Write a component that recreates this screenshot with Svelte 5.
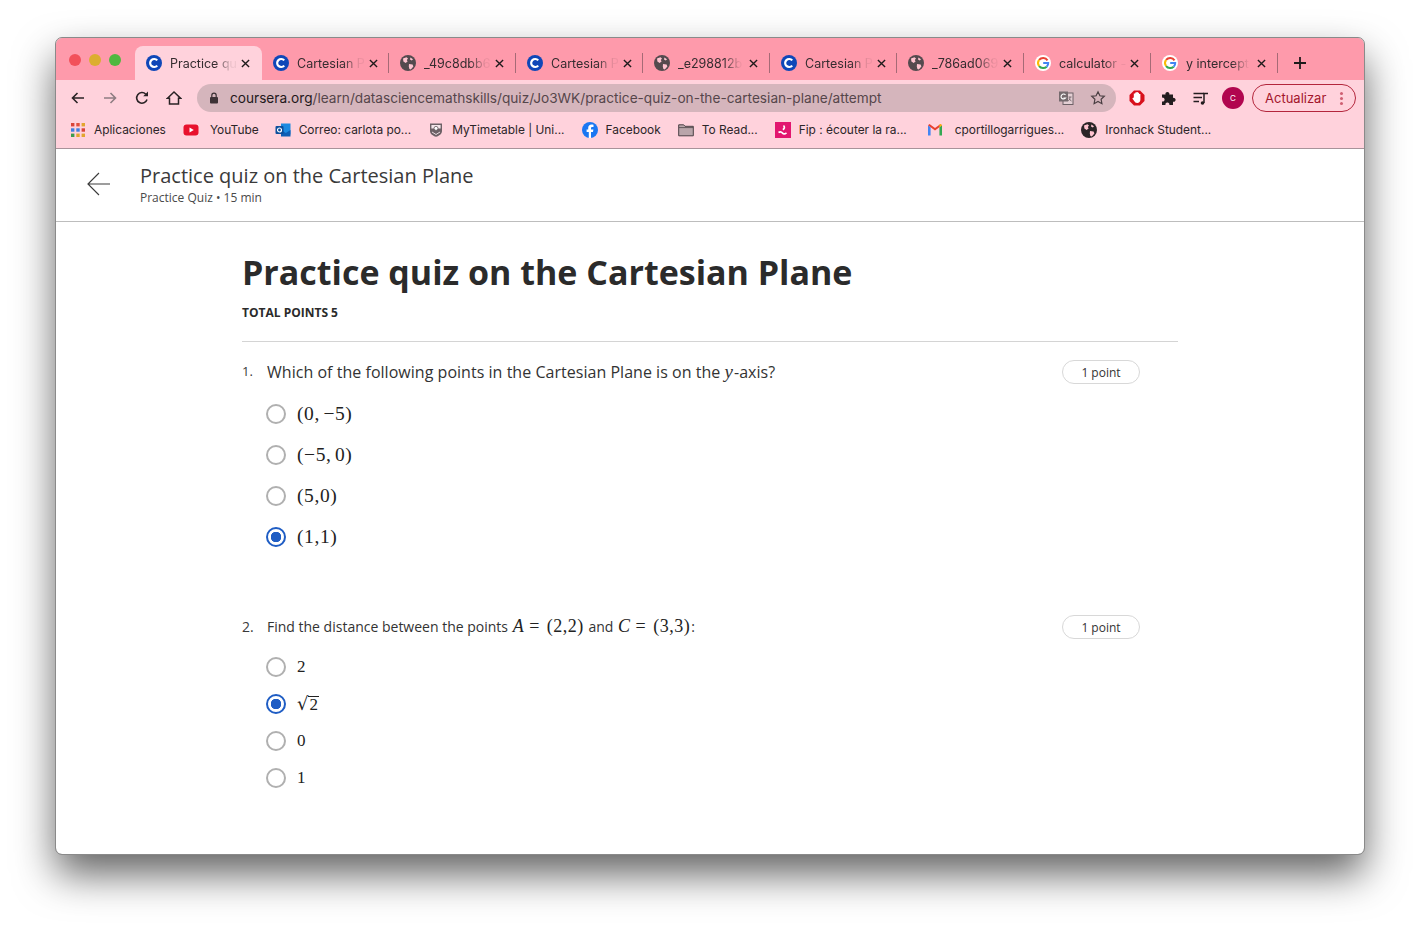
<script>
	// browser chrome data
	const tabs = [
		{ icon: 'c', title: 'Practice qu', active: true },
		{ icon: 'c', title: 'Cartesian P' },
		{ icon: 'globe', title: '_49c8dbb6' },
		{ icon: 'c', title: 'Cartesian P' },
		{ icon: 'globe', title: '_e298812b' },
		{ icon: 'c', title: 'Cartesian P' },
		{ icon: 'globe', title: '_786ad069' },
		{ icon: 'g', title: 'calculator -' },
		{ icon: 'g', title: 'y intercept' }
	];

	const bookmarks = [
		{ icon: 'apps', label: 'Aplicaciones' },
		{ icon: 'yt', label: 'YouTube', kind: 'tight-icon' },
		{ icon: 'outlook', label: 'Correo: carlota po...' },
		{ icon: 'shield', label: 'MyTimetable | Uni...' },
		{ icon: 'fb', label: 'Facebook' },
		{ icon: 'folder', label: 'To Read...' },
		{ icon: 'fip', label: 'Fip : écouter la ra...' },
		{ icon: 'gmail', label: 'cportillogarrigues...', kind: 'gmail' },
		{ icon: 'globe-dark', label: 'Ironhack Student...' }
	];

	const q1 = [
		{ label: '(0, −5)', checked: false },
		{ label: '(−5, 0)', checked: false },
		{ label: '(5,0)', checked: false },
		{ label: '(1,1)', checked: true }
	];
</script>

{#snippet favicon(kind)}
	{#if kind === 'c'}
		<svg class="fav" viewBox="0 0 16 16">
			<circle cx="8" cy="8" r="8" fill="#0f47b8" />
			<path d="M11.2 5.4a4 4 0 1 0 0 5.2" fill="none" stroke="#fff" stroke-width="2.2" />
		</svg>
	{:else if kind === 'globe' || kind === 'globe-dark'}
		<svg class="fav" viewBox="0 0 16 16">
			<circle cx="8" cy="8" r="8" fill={kind === 'globe' ? '#544a4e' : '#2b2527'} />
			<path d="M3 3.5 6.5 2.2 8 3.6 6.8 5 7.6 6.4 5.6 8 3.4 6.6ZM9 9l3.6.6.8 1.8-2.6 3-1.4-.4-.6-2.6ZM10.4 2.4l2.6 1.8-1.2 1.4-1.8-1.2Z" fill="#ffc4d0" />
		</svg>
	{:else if kind === 'g'}
		<svg class="fav" viewBox="0 0 16 16">
			<circle cx="8" cy="8" r="8" fill="#fff" />
			<path d="M12.5 5.4A5.2 5.2 0 0 0 4.1 4.9" fill="none" stroke="#ea4335" stroke-width="2" />
			<path d="M4.1 4.9a5.2 5.2 0 0 0 0 6.2" fill="none" stroke="#fbbc05" stroke-width="2" />
			<path d="M4.1 11.1a5.2 5.2 0 0 0 7.6 .6" fill="none" stroke="#34a853" stroke-width="2" />
			<path d="M11.7 11.7A5 5 0 0 0 13.2 8H8.2" fill="none" stroke="#4285f4" stroke-width="2" />
		</svg>
	{:else if kind === 'apps'}
		<svg class="fav" viewBox="0 0 16 16">
			<rect x="1" y="1" width="3.4" height="3.4" fill="#d9453a" />
			<rect x="6.3" y="1" width="3.4" height="3.4" fill="#e0503f" />
			<rect x="11.6" y="1" width="3.4" height="3.4" fill="#e2a52d" />
			<rect x="1" y="6.3" width="3.4" height="3.4" fill="#3f7fe0" />
			<rect x="6.3" y="6.3" width="3.4" height="3.4" fill="#3f7fe0" />
			<rect x="11.6" y="6.3" width="3.4" height="3.4" fill="#d9453a" />
			<rect x="1" y="11.6" width="3.4" height="3.4" fill="#3a9c50" />
			<rect x="6.3" y="11.6" width="3.4" height="3.4" fill="#e2a52d" />
			<rect x="11.6" y="11.6" width="3.4" height="3.4" fill="#e2a52d" />
		</svg>
	{:else if kind === 'yt'}
		<svg class="fav" viewBox="0 0 16 16">
			<rect x="0.5" y="2.5" width="15" height="11" rx="3" fill="#e8112d" />
			<path d="M6.5 5.5 10.8 8l-4.3 2.5Z" fill="#fff" />
		</svg>
	{:else if kind === 'outlook'}
		<svg class="fav" viewBox="0 0 16 16">
			<path d="M6 1.5h9.5v11H6Z" fill="#1c8ae0" />
			<path d="M6 8l4.8 3 4.7-3v6.5H6Z" fill="#0f5fb5" />
			<rect x="0.5" y="4" width="8" height="8" rx="1" fill="#0d4f9c" />
			<circle cx="4.5" cy="8" r="2" fill="none" stroke="#fff" stroke-width="1.2" />
		</svg>
	{:else if kind === 'shield'}
		<svg class="fav" viewBox="0 0 16 16">
			<path d="M2 1.5h12v7.5c0 3-3 4.8-6 5.8-3-1-6-2.8-6-5.8Z" fill="#6d6166" />
			<path d="M3.4 3h9.2v3.5H3.4Z" fill="#f4e6ea" />
			<circle cx="8" cy="6.4" r="2" fill="#fff" stroke="#4e4347" stroke-width=".7" />
			<path d="M4 10 8 12.5 12 10" fill="none" stroke="#e9dbe0" stroke-width="1" />
		</svg>
	{:else if kind === 'fb'}
		<svg class="fav" viewBox="0 0 16 16">
			<circle cx="8" cy="8" r="8" fill="#1b77f2" />
			<path d="M9 16V10h2l.4-2.4H9V6.2c0-.8.4-1.3 1.4-1.3h1.1V2.8c-.6-.1-1.2-.2-1.8-.2-2.2 0-3.5 1.3-3.5 3.4v1.6H4.6V10h2.2v6Z" fill="#fff" />
		</svg>
	{:else if kind === 'folder'}
		<svg class="fav" viewBox="0 0 16 16">
			<path d="M.7 2.8h5l1.3 1.5h8.3v9.5H.7Z" fill="#b9a5aa" stroke="#4a4145" stroke-width="1" />
			<path d="M1 5.6h14" stroke="#4a4145" stroke-width=".8" />
		</svg>
	{:else if kind === 'fip'}
		<svg class="fav" viewBox="0 0 16 16">
			<rect width="16" height="16" fill="#e2166f" />
			<path d="M8.5 3.5c1.5 1.6 1 3-.6 4.2M3.5 10.5c1.5-1 3-.7 4 .6 1 1 2.500 1 4-.3" fill="none" stroke="#fff" stroke-width="1.7" />
		</svg>
	{:else if kind === 'gmail'}
		<svg class="fav" viewBox="0 0 16 16">
			<path d="M1 13.500V3.300l2.600 2V13.500Z" fill="#4285f4" />
			<path d="M15 13.500V3.300l-2.600 2V13.500Z" fill="#34a853" />
			<path d="M1 3.300 8 8.600 15 3.300 13.500 2 8 6 2.500 2Z" fill="#e8412f" />
			<path d="M12.400 5.300 15 3.300 13.500 2 12.400 2.800Z" fill="#fbbc05" />
		</svg>
	{/if}
{/snippet}

<div class="desktop">
	<div class="window">
		<div class="tabstrip">
			<div class="lights">
				<span class="light red"></span>
				<span class="light yellow"></span>
				<span class="light green"></span>
			</div>
			{#each tabs as tab}
				<div class="tab" class:active={tab.active}>
					{@render favicon(tab.icon)}
					<span class="tab-title">{tab.title}</span>
					<svg class="tab-close" viewBox="0 0 10 10">
						<path d="M1 1l8 8M9 1l-8 8" stroke="#1e1a1b" stroke-width="1.500" />
					</svg>
				</div>
			{/each}
			<svg class="new-tab" viewBox="0 0 12 12">
				<path d="M6 0v12M0 6h12" stroke="#1e1a1b" stroke-width="1.800" />
			</svg>
		</div>

		<div class="toolbar">
			<button class="tool" aria-label="Back">
				<svg viewBox="0 0 16 16"><path d="M14 8H2.500M7.500 3 2.500 8l5 5" fill="none" stroke="#2a2325" stroke-width="1.600" /></svg>
			</button>
			<button class="tool" aria-label="Forward">
				<svg viewBox="0 0 16 16"><path d="M2 8h11.500M8.500 3l5 5-5 5" fill="none" stroke="#8f7d82" stroke-width="1.600" /></svg>
			</button>
			<button class="tool" aria-label="Reload">
				<svg viewBox="0 0 16 16">
					<path d="M13 9.500A5.300 5.300 0 1 1 11.800 4.200" fill="none" stroke="#2a2325" stroke-width="1.600" />
					<path d="M9.200 6.200H14V1.400Z" fill="#2a2325" />
				</svg>
			</button>
			<button class="tool" aria-label="Home">
				<svg viewBox="0 0 16 16"><path d="M1.500 8.200 8 2l6.500 6.200h-2v5.800h-9V8.200Z" fill="none" stroke="#2a2325" stroke-width="1.500" /></svg>
			</button>

			<div class="omnibox">
				<svg class="lock" viewBox="0 0 10 12">
					<rect x="1" y="5" width="8" height="6.500" rx="1" fill="#3d3236" />
					<path d="M2.800 5V3.400a2.200 2.200 0 0 1 4.400 0V5" fill="none" stroke="#3d3236" stroke-width="1.200" />
				</svg>
				<span class="url"><b>coursera.org</b>/learn/datasciencemathskills/quiz/Jo3WK/practice-quiz-on-the-cartesian-plane/attempt</span>
				<svg class="omni-icon translate" viewBox="0 0 16 16">
					<rect x="5" y="3" width="10" height="11.500" fill="#e4cfd4" stroke="#6d6166" stroke-width="1" />
					<rect x="1" y="1.500" width="9" height="10" fill="#756a6e" />
					<path d="M7.500 5A2.500 2.500 0 1 0 7.600 8H5.500" fill="none" stroke="#fff" stroke-width="1.100" />
					<path d="M10.500 7h3M12 7c0 2-1 3.500-2 4M11 8.500c.5 1 1.500 2 2.500 2.500" fill="none" stroke="#6d6166" stroke-width=".9" />
				</svg>
				<svg class="omni-icon" viewBox="0 0 16 16">
					<path d="M8 1.800l1.900 4 4.400.5-3.200 3 .8 4.400L8 11.500l-3.900 2.200.8-4.400-3.200-3 4.400-.5Z" fill="none" stroke="#4a3f43" stroke-width="1.200" />
				</svg>
			</div>

			<div class="ext">
				<svg class="ext-icon" viewBox="0 0 16 16">
					<path d="M5 .5h6L15.500 5v6L11 15.500H5L.5 11V5Z" fill="#d8101c" />
					<path d="M4.800 3.400h1.400v-1h1.300v-.3h1.300v.7h1.300v1.200h1.300V9.500c0 2-1.300 3.500-3.200 3.500-1.500 0-2.300-.7-3-2L3.300 8.400l1.200-.8.300.4Z" fill="#fff" />
				</svg>
				<svg class="ext-icon puzzle" viewBox="0 0 16 16">
					<path d="M1 4.500h3.500a2 2 0 1 1 3.800 0h3.700v3.400a2 2 0 1 1 0 3.800V15H8.300a2 2 0 1 0-3.800 0H1v-3.500a2 2 0 1 0 0-3.800Z" fill="#231d1f" />
				</svg>
				<svg class="ext-icon" viewBox="0 0 16 16">
					<path d="M.5 3.500H11M.5 7.500H9M.5 11.500H6" stroke="#231d1f" stroke-width="1.500" />
					<path d="M11 13V3.500h4" fill="none" stroke="#231d1f" stroke-width="1.500" />
					<circle cx="9.500" cy="13" r="1.800" fill="#231d1f" />
				</svg>
				<span class="avatar">C</span>
			</div>

			<div class="update">
				<span>Actualizar</span>
				<span class="dots"><i></i><i></i><i></i></span>
			</div>
		</div>

		<div class="bookmarks">
			{#each bookmarks as b}
				<div class="bookmark {b.kind ?? ''}">
					{@render favicon(b.icon)}
					<span>{b.label}</span>
				</div>
			{/each}
		</div>

		<header class="page-header">
			<svg class="back" viewBox="0 0 24 24">
				<path d="M24 12H1M12.500 .5 1 12l11.500 11.500" fill="none" stroke="#3c3c3c" stroke-width="1.200" />
			</svg>
			<div>
				<div class="page-title">Practice quiz on the Cartesian Plane</div>
				<div class="page-sub">Practice Quiz • 15 min</div>
			</div>
		</header>

		<main class="content">
			<h1>Practice quiz on the Cartesian Plane</h1>
			<div class="total">TOTAL POINTS 5</div>

			<section class="question first">
				<div class="q-row">
					<span class="q-num">1.</span>
					<p class="q-text">Which of the following points in the Cartesian Plane is on the <i class="math">y</i>-axis?</p>
					<span class="pill">1 point</span>
				</div>
				<div class="options wide">
					{#each q1 as o}
						<label class="option">
							<input type="radio" name="q1" checked={o.checked} />
							<span class="math-val">{o.label}</span>
						</label>
					{/each}
				</div>
			</section>

			<section class="question second">
				<div class="q-row">
					<span class="q-num small">2.</span>
					<p class="q-text small">Find the distance between the points <span class="math-inline"><i>A</i><span class="eq">=</span>(2,2)</span> and <span class="math-inline"><i>C</i><span class="eq">=</span>(3,3)</span>:</p>
					<span class="pill">1 point</span>
				</div>
				<div class="options narrow">
					<label class="option">
						<input type="radio" name="q2" />
						<span class="math-val">2</span>
					</label>
					<label class="option">
						<input type="radio" name="q2" checked />
						<span class="math-val"><span class="radical">√</span><span class="over">2</span></span>
					</label>
					<label class="option">
						<input type="radio" name="q2" />
						<span class="math-val">0</span>
					</label>
					<label class="option">
						<input type="radio" name="q2" />
						<span class="math-val">1</span>
					</label>
				</div>
			</section>
		</main>
	</div>
</div>

<style>
	:global(body) {
		background: #fff;
	}
	.desktop {
		box-sizing: border-box;
		height: 928px;
		padding: 38px 56px 0;
		overflow: hidden;
	}
	.window {
		box-sizing: border-box;
		width: 1308px;
		height: 816px;
		background: #fff;
		border-radius: 6px;
		overflow: hidden;
		outline: 1px solid #8a8a8a;
		box-shadow: 0 20px 40px rgba(0, 0, 0, 0.62);
		font-family: 'Open Sans', sans-serif;
		color: #2b2b2b;
	}

	/* tab strip */
	.tabstrip {
		display: flex;
		align-items: flex-end;
		height: 42px;
		background: #fe9aab;
		padding-top: 8px;
		box-sizing: border-box;
	}
	.lights {
		display: flex;
		gap: 8px;
		width: 79px;
		align-self: flex-start;
		padding: 8px 0 0 13px;
		box-sizing: border-box;
	}
	.light {
		width: 12px;
		height: 12px;
		border-radius: 50%;
	}
	.red { background: #f2505a; }
	.yellow { background: #dcae2f; }
	.green { background: #4fb83f; }
	.tab {
		position: relative;
		display: flex;
		align-items: center;
		width: 127px;
		height: 34px;
		box-sizing: border-box;
		padding: 0 10px 0 11px;
		font-family: Inter, sans-serif;
		font-size: 12.500px;
		color: #352c2f;
	}
	.tab::after {
		content: '';
		position: absolute;
		right: 0;
		top: 7px;
		height: 20px;
		width: 1px;
		background: #a66a76;
	}
	.tab.active::after {
		display: none;
	}
	.tab.active {
		background: #ffd2dc;
		border-radius: 8px 8px 0 0;
	}
	.fav {
		flex: none;
		width: 16px;
		height: 16px;
	}
	.tab-title {
		flex: 1;
		margin-left: 8px;
		white-space: nowrap;
		-webkit-mask-image: linear-gradient(to right, #000 68%, rgba(0, 0, 0, 0.08) 92%);
		mask-image: linear-gradient(to right, #000 68%, rgba(0, 0, 0, 0.08) 92%);
	}
	.tab-close {
		flex: none;
		width: 9px;
		height: 9px;
		margin-left: 4px;
		margin-right: 2px;
	}
	.new-tab {
		width: 12px;
		height: 12px;
		margin: 0 0 11px 16px;
	}

	/* toolbar */
	.toolbar {
		display: flex;
		align-items: center;
		height: 36px;
		background: #ffd2dc;
		padding-left: 6px;
		box-sizing: border-box;
	}
	.tool {
		width: 32px;
		height: 28px;
		padding: 0;
		border: 0;
		background: none;
		display: flex;
		align-items: center;
		justify-content: center;
	}
	.tool svg {
		width: 16px;
		height: 16px;
	}
	.omnibox {
		display: flex;
		align-items: center;
		width: 919px;
		height: 28px;
		margin-left: 7px;
		border-radius: 14px;
		background: #d5b5bc;
		box-sizing: border-box;
		padding: 0 10px 0 12px;
	}
	.lock {
		width: 10px;
		height: 12px;
		flex: none;
	}
	.url {
		flex: 1;
		margin-left: 11px;
		font-family: Inter, sans-serif;
		font-size: 13.650px;
		color: #55464b;
		white-space: nowrap;
	}
	.url b {
		font-weight: 400;
		color: #1f191b;
	}
	.omni-icon {
		width: 16px;
		height: 16px;
		flex: none;
		margin-left: 16px;
	}
	.ext {
		display: flex;
		align-items: center;
		gap: 16px;
		margin-left: 13px;
	}
	.ext-icon {
		width: 16px;
		height: 16px;
	}
	.avatar {
		width: 22px;
		height: 22px;
		border-radius: 50%;
		background: #b1064f;
		color: #fff;
		font-family: Inter, sans-serif;
		font-size: 8px;
		display: flex;
		align-items: center;
		justify-content: center;
		margin-left: -3px;
	}
	.update {
		display: flex;
		align-items: center;
		justify-content: space-between;
		width: 104px;
		height: 28px;
		box-sizing: border-box;
		margin-left: 8px;
		padding: 0 12px 0 12px;
		border: 1px solid #b3263c;
		border-radius: 14px;
		font-family: Inter, sans-serif;
		font-size: 13px;
		color: #a3162c;
	}
	.dots {
		display: flex;
		flex-direction: column;
		gap: 2px;
	}
	.dots i {
		width: 3px;
		height: 3px;
		border-radius: 50%;
		background: #cf5f72;
	}

	/* bookmarks */
	.bookmarks {
		display: flex;
		align-items: center;
		gap: 17px;
		height: 33px;
		padding: 0 0 5px 14px;
		box-sizing: border-box;
		background: #ffd2dc;
		border-bottom: 1px solid #a8939a;
		font-family: Inter, sans-serif;
		font-size: 11.900px;
		color: #2c2528;
	}
	.bookmark {
		display: flex;
		align-items: center;
		gap: 8px;
		white-space: nowrap;
	}
	.bookmark.tight-icon {
		gap: 11px;
		margin-right: -1px;
	}
	.bookmark.gmail {
		gap: 12px;
		margin-left: 3px;
	}

	/* coursera header */
	.page-header {
		display: flex;
		align-items: center;
		height: 73px;
		box-sizing: border-box;
		padding: 0 0 2px 31px;
		border-bottom: 1px solid #bdbdbd;
	}
	.back {
		width: 23px;
		height: 24px;
		margin-right: 30px;
	}
	.page-title {
		font-size: 20px;
		line-height: 28px;
		color: #3a3a3a;
	}
	.page-sub {
		font-size: 12px;
		line-height: 16px;
		color: #4a4a4a;
	}

	/* quiz */
	.content {
		width: 936px;
		margin-left: 186px;
	}
	h1 {
		margin: 0;
		padding-top: 27px;
		font-size: 34px;
		line-height: 46px;
		font-weight: 700;
		color: #2b2b2b;
	}
	.total {
		margin-top: 9px;
		padding-bottom: 19px;
		font-size: 12px;
		line-height: 18px;
		font-weight: 700;
		border-bottom: 1px solid #d4d4d4;
	}
	.question.first {
		margin-top: 18px;
	}
	.question.second {
		margin-top: 68px;
	}
	.q-row {
		display: flex;
		align-items: center;
		width: 898px;
		height: 24px;
	}
	.q-num {
		width: 25px;
		font-size: 13px;
		color: #3a3a3a;
		transform: translateY(-1px);
	}
	.q-num.small {
		font-size: 14px;
	}
	.q-text {
		flex: 1;
		margin: 0;
		font-size: 16px;
		letter-spacing: 0.03px;
		color: #333;
		white-space: nowrap;
	}
	.q-text.small {
		font-size: 14px;
		letter-spacing: 0;
		padding-bottom: 2px;
	}
	.math {
		font-family: 'Liberation Serif', serif;
		font-size: 19px;
		padding-right: 1px;
	}
	.math-inline {
		font-family: 'Liberation Serif', serif;
		font-size: 18px;
		letter-spacing: 0.5px;
		color: #222;
		margin: 0 1px;
	}
	.eq {
		margin: 0 7px 0 5px;
	}
	.pill {
		width: 78px;
		height: 24px;
		box-sizing: border-box;
		border: 1px solid #d8d8d8;
		border-radius: 12px;
		font-size: 12px;
		line-height: 23px;
		text-align: center;
		color: #333;
	}
	.options {
		display: flex;
		flex-direction: column;
		padding-left: 24px;
	}
	.options.wide {
		margin-top: 20px;
		gap: 21px;
	}
	.options.narrow {
		margin-top: 18px;
		gap: 17px;
	}
	.option {
		display: flex;
		align-items: center;
		height: 20px;
	}
	input {
		appearance: none;
		-webkit-appearance: none;
		flex: none;
		width: 20px;
		height: 20px;
		margin: 0 11px 0 0;
		border: 2px solid #b0b0b0;
		border-radius: 50%;
		background: #fff;
		box-sizing: border-box;
	}
	input:checked {
		border-color: #1f5dc4;
		background: radial-gradient(circle, #1f5dc4 0 5px, #fff 5.500px);
	}
	.math-val {
		font-family: 'Liberation Serif', serif;
		font-size: 19.500px;
		letter-spacing: 0.6px;
		word-spacing: -2px;
		color: #222;
	}
	.narrow .math-val {
		font-size: 17px;
		letter-spacing: 0;
	}
	.radical {
		font-family: 'DejaVu Sans', sans-serif;
		font-size: 18px;
	}
	.over {
		display: inline-block;
		border-top: 1px solid #222;
		line-height: 16px;
		padding: 0 1px;
	}
</style>
